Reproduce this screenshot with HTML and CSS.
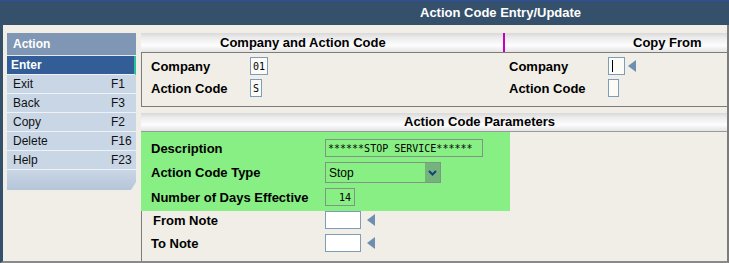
FILE: index.html
```html
<!DOCTYPE html>
<html>
<head>
    <meta charset="utf-8">
    <title>Action Code Entry/Update</title>
    <link rel="stylesheet" href="styles.css">
</head>
<body>
    <div class="screen">
        <div class="titlebar">Action Code Entry/Update</div>
        <div class="layout">
            <aside class="actions">
                <div class="actions-head">Action</div>
                <ul class="action-list">
                    <li class="is-active"><span>Enter</span></li>
                    <li><span>Exit</span><span>F1</span></li>
                    <li><span>Back</span><span>F3</span></li>
                    <li><span>Copy</span><span>F2</span></li>
                    <li><span>Delete</span><span>F16</span></li>
                    <li><span>Help</span><span>F23</span></li>
                </ul>
                <div class="actions-foot"></div>
            </aside>
            <main class="panel">
                <section class="group">
                    <div class="group-head split">
                        <h2 class="head-left">Company and Action Code</h2>
                        <h2 class="head-right">Copy From</h2>
                    </div>
                    <div class="group-body">
                        <div class="fields fields-left">
                            <div class="field"><label>Company</label><span class="box w18">01</span></div>
                            <div class="field"><label>Action Code</label><span class="box w12">S</span></div>
                        </div>
                        <div class="fields">
                            <div class="field">
                                <label>Company</label><span class="box w17"><span class="caret"></span></span>
                                <svg class="arrow" width="8" height="12" viewBox="0 0 8 12"><path d="M8 0 L0 6 L8 12 Z" fill="#6f8fb1"/></svg>
                            </div>
                            <div class="field"><label>Action Code</label><span class="box w11"></span></div>
                        </div>
                    </div>
                </section>
                <section class="group group-fill">
                    <h2 class="group-head head-params">Action Code Parameters</h2>
                    <div class="params">
                        <div class="highlight">
                            <div class="field"><label>Description</label><span class="box box-green w158">******STOP SERVICE******</span></div>
                            <div class="field field-tall">
                                <label>Action Code Type</label>
                                <span class="select">
                                    <span class="select-text">Stop</span>
                                    <span class="select-btn"><svg width="9" height="6" viewBox="0 0 9 6"><path d="M1 1 L4.5 4.5 L8 1" fill="none" stroke="#16407a" stroke-width="2"/></svg></span>
                                </span>
                            </div>
                            <div class="field"><label>Number of Days Effective</label><span class="box box-green box-num w30">14</span></div>
                        </div>
                        <div class="rows">
                            <div class="field field-note">
                                <label class="indent">From Note</label><span class="box w36"></span>
                                <svg class="arrow" width="8" height="12" viewBox="0 0 8 12"><path d="M8 0 L0 6 L8 12 Z" fill="#6f8fb1"/></svg>
                            </div>
                            <div class="field field-note">
                                <label>To Note</label><span class="box w36"></span>
                                <svg class="arrow" width="8" height="12" viewBox="0 0 8 12"><path d="M8 0 L0 6 L8 12 Z" fill="#6f8fb1"/></svg>
                            </div>
                        </div>
                    </div>
                </section>
            </main>
        </div>
    </div>
</body>
</html>
```
FILE: styles.css
```css
* {
    box-sizing: border-box;
}
html, body {
    margin: 0;
}
body {
    width: 729px;
    height: 263px;
    overflow: hidden;
    font-family: "Liberation Sans", Arial, sans-serif;
    font-size: 12px;
    color: #000;
    background: #f0eee6;
}
h2 {
    margin: 0;
    font-size: 13px;
    font-weight: bold;
}
.screen {
    display: flex;
    flex-direction: column;
    height: 263px;
}
.titlebar {
    height: 25px;
    padding-left: 420px;
    border-top: 1px solid #2c4ea6;
    background: #34506b;
    color: #fff;
    font-size: 13px;
    font-weight: bold;
    line-height: 24px;
}
.layout {
    flex: 1;
    display: flex;
    gap: 5px;
    padding: 8px 0 0 4px;
    border-left: 3px solid #34506b;
    border-right: 2px solid #7c7c7c;
    border-bottom: 2px solid #8a8a8a;
}

/* action menu */
.actions {
    width: 129px;
    flex: none;
    align-self: flex-start;
}
.actions-head {
    height: 23px;
    padding-left: 6px;
    border-bottom: 1px solid #e3e9f0;
    background: #7f97b4;
    color: #fff;
    font-weight: bold;
    line-height: 22px;
}
.action-list {
    list-style: none;
    margin: 0;
    padding: 0;
}
.action-list li {
    display: grid;
    grid-template-columns: 98px auto;
    height: 19px;
    padding-left: 6px;
    border-bottom: 1px solid #eef2f7;
    background: #c9d6e5;
    color: #111;
    line-height: 18px;
}
.action-list li.is-active {
    padding-left: 4px;
    border-right: 2px solid #2dbf9b;
    background: #325d96;
    color: #fff;
    font-weight: bold;
}
.actions-foot {
    height: 20px;
    background: linear-gradient(#c9d6e5, #b5c6d9);
    clip-path: polygon(0 0, 100% 0, 100% 60%, calc(100% - 5px) 100%, 0 100%);
}

/* panel */
.panel {
    flex: 1;
    min-width: 0;
    display: flex;
    flex-direction: column;
}
.group-fill {
    flex: 1;
    display: flex;
    flex-direction: column;
    margin-top: 6px;
}
.group-head {
    height: 19px;
    line-height: 19px;
    background: linear-gradient(#d9d9d9 0%, #ececec 25%, #fdfdfd 65%, #e4e4e4 100%);
    white-space: nowrap;
}
.split {
    display: flex;
    background: none;
}
.head-left, .head-right {
    background: linear-gradient(#d9d9d9 0%, #ececec 25%, #fdfdfd 65%, #e4e4e4 100%);
}
.head-left {
    width: 364px;
    padding-left: 79px;
    border-right: 2px solid #c400c4;
}
.head-right {
    flex: 1;
    padding-left: 128px;
}
.head-params {
    height: 19px;
    line-height: 18px;
    padding-left: 263px;
    border-bottom: 1px solid #9a9a9a;
}
.group-body {
    display: flex;
    padding: 4px 0 9px;
    border: 1px solid #7c7c7c;
    border-right: 0;
}
.fields {
    display: flex;
    flex-direction: column;
    gap: 4px;
}
.fields-left {
    width: 367px;
    padding-left: 9px;
}
.field {
    display: flex;
    align-items: center;
    height: 18px;
}
.field-tall {
    height: 21px;
}
.field label {
    width: 99px;
    flex: none;
    font-size: 13px;
    font-weight: bold;
}
.params {
    flex: 1;
    border-left: 1px solid #7c7c7c;
}
.params .field label {
    width: 174px;
}
.params .field label.indent {
    padding-left: 2px;
}
.highlight {
    display: flex;
    flex-direction: column;
    gap: 5px;
    width: 369px;
    margin-left: -1px;
    padding: 7px 0 5px 10px;
    background: #87ef84;
}
.rows {
    display: flex;
    flex-direction: column;
    gap: 5px;
    padding-left: 9px;
}

/* inputs */
.box {
    display: inline-flex;
    align-items: center;
    height: 18px;
    padding: 0 2px;
    border: 1px solid #7f9db9;
    background: #fbfbf8;
    font-family: "DejaVu Sans Mono", "Liberation Mono", monospace;
    font-size: 10px;
    white-space: pre;
}
.box-green {
    border-color: #7f9684;
    background: transparent;
}
.box-num {
    justify-content: flex-end;
    padding-right: 3px;
}
.w11 { width: 11px; }
.w12 { width: 12px; }
.w17 { width: 17px; }
.w18 { width: 18px; }
.w30 { width: 30px; }
.w36 { width: 36px; background: #fff; }
.w158 { width: 158px; }
.caret {
    width: 1px;
    height: 12px;
    margin-left: 1px;
    background: #000;
}
.arrow {
    margin-left: 3px;
    flex: none;
}
.field-note .arrow {
    margin-left: 6px;
}
.select {
    display: flex;
    align-items: center;
    width: 116px;
    height: 21px;
    border: 1px solid #7f9684;
}
.select-text {
    flex: 1;
    padding-left: 3px;
    font-size: 12px;
}
.select-btn {
    display: flex;
    align-items: center;
    justify-content: center;
    width: 15px;
    height: 19px;
    background: #74b47c;
}
```
